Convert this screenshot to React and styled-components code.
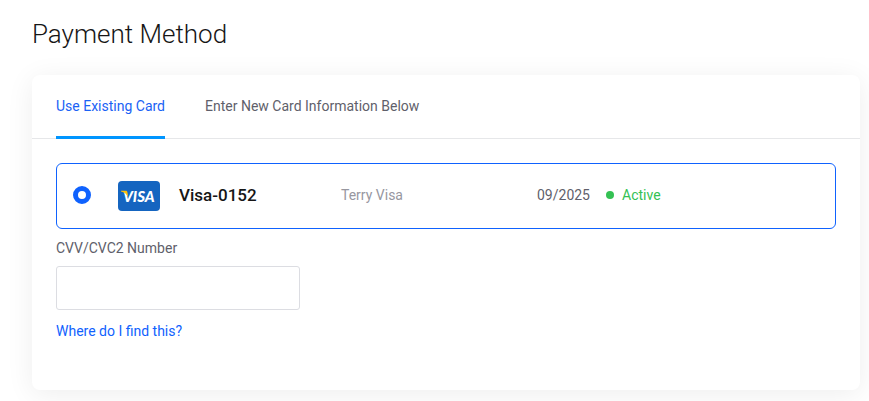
import React, { useState } from 'react';
import styled, { createGlobalStyle } from 'styled-components';

const savedCards = [
  { id: 'visa-0152', label: 'Visa-0152', holder: 'Terry Visa', expires: '09/2025', status: 'Active' },
];

const VisaLogo = () => (
  <Logo viewBox="0 0 42 30" role="img" aria-label="Visa">
    <rect width="42" height="30" rx="4" fill="#1565c0" />
    <text
      x="5"
      y="21"
      fill="#fff"
      fontFamily="Lato, sans-serif"
      fontSize="15"
      fontWeight="900"
      fontStyle="italic"
    >
      VISA
    </text>
    <path d="M3 9.800h4.600c1 0 1.600.5 1.800 1.400l.9 5C8.900 13.200 6.600 11.300 3 10.400z" fill="#ffc107" />
  </Logo>
);

const PaymentMethod = () => {
  const [tab, setTab] = useState('existing');
  const [selected, setSelected] = useState('visa-0152');
  const [cvv, setCvv] = useState('');

  return (
    <Page>
      <GlobalStyle />
      <Title>Payment Method</Title>
      <Panel>
        <Tabs>
          <Tab type="button" $active={tab === 'existing'} onClick={() => setTab('existing')}>
            Use Existing Card
          </Tab>
          <Tab type="button" $active={tab === 'new'} onClick={() => setTab('new')}>
            Enter New Card Information Below
          </Tab>
        </Tabs>
        <PanelBody>
          {savedCards.map((card) => (
            <CardRow key={card.id} $selected={selected === card.id}>
              <Radio
                type="radio"
                name="card"
                value={card.id}
                checked={selected === card.id}
                onChange={() => setSelected(card.id)}
              />
              <VisaLogo />
              <CardDetails>
                <CardName>{card.label}</CardName>
                <CardHolder>{card.holder}</CardHolder>
                <CardState>
                  <span>{card.expires}</span>
                  <Status>{card.status}</Status>
                </CardState>
              </CardDetails>
            </CardRow>
          ))}
          <FieldLabel htmlFor="cvv">CVV/CVC2 Number</FieldLabel>
          <CvvInput id="cvv" value={cvv} onChange={(e) => setCvv(e.target.value)} />
          <HelpLink href="#cvv">Where do I find this?</HelpLink>
        </PanelBody>
      </Panel>
    </Page>
  );
};

const GlobalStyle = createGlobalStyle`
  * {
    box-sizing: border-box;
  }

  body {
    margin: 0;
    background: #fff;
    color: #5f5f6b;
    font-family: Roboto, sans-serif;
    font-size: 14px;
    line-height: 20px;
  }
`;

const Page = styled.main`
  padding: 18px 9px 11px 32px;
  overflow: hidden;
`;

const Title = styled.h1`
  margin: 0 0 25px;
  color: #161616;
  font-size: 26px;
  font-weight: 300;
  line-height: 32px;
`;

const Panel = styled.section`
  background: #fff;
  border-radius: 8px;
  box-shadow: 0 4px 28px rgba(0, 0, 0, 0.07);
`;

const Tabs = styled.div`
  display: flex;
  gap: 40px;
  padding: 0 24px;
  border-bottom: 1px solid #e6e7e9;
`;

const Tab = styled.button`
  margin-bottom: -1px;
  padding: 21px 0 20px;
  border: 0;
  border-bottom: 3px solid ${({ $active }) => ($active ? '#0095ff' : 'transparent')};
  background: none;
  color: ${({ $active }) => ($active ? '#1a62f5' : '#5f5f6b')};
  font: inherit;
  cursor: pointer;
`;

const PanelBody = styled.div`
  display: flex;
  flex-direction: column;
  align-items: flex-start;
  padding: 24px 24px 49px;
`;

const CardRow = styled.label`
  display: flex;
  align-items: center;
  width: 100%;
  padding: 15px 16px 17px;
  border: 1px solid ${({ $selected }) => ($selected ? '#0f62fe' : '#d9dbe0')};
  border-radius: 6px;
  cursor: pointer;
`;

const Radio = styled.input`
  appearance: none;
  flex: none;
  width: 18px;
  height: 18px;
  margin: 0 27px 0 0;
  border: 1px solid #8d8d99;
  border-radius: 50%;

  &:checked {
    border: 5px solid #0f62fe;
  }
`;

const Logo = styled.svg`
  flex: none;
  width: 42px;
  height: 30px;
  margin: 2px 19px 0 0;
`;

const CardDetails = styled.div`
  display: grid;
  flex: 1;
  grid-template-columns: 81fr 98fr 141fr;
  align-items: center;
`;

const CardName = styled.span`
  color: #161616;
  font-size: 17px;
  font-weight: 500;
`;

const CardHolder = styled.span`
  color: #97979f;
`;

const CardState = styled.div`
  display: flex;
  gap: 16px;
`;

const Status = styled.span`
  display: flex;
  align-items: center;
  gap: 8px;
  color: #34c153;

  &::before {
    content: '';
    width: 8px;
    height: 8px;
    border-radius: 50%;
    background: #34c153;
  }
`;

const FieldLabel = styled.label`
  margin: 9px 0 8px;
`;

const CvvInput = styled.input`
  width: 244px;
  height: 44px;
  padding: 0 12px;
  border: 1px solid #dcdde2;
  border-radius: 3px;
  background: #fff;
  color: #161616;
  font: inherit;
`;

const HelpLink = styled.a`
  margin-top: 11px;
  color: #0f62fe;
  text-decoration: none;
`;

export default PaymentMethod;
